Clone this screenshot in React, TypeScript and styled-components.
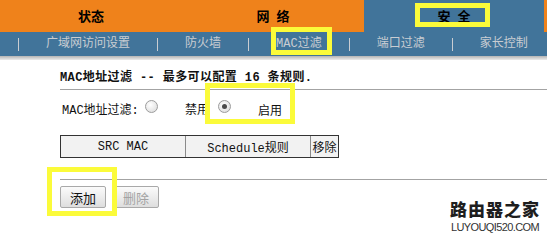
import React from "react";
import styled, { createGlobalStyle } from "styled-components";

const colors = {
  orange: "#ef821b",
  blue: "#41749a",
  navText: "#c9cdd2",
  rule: "#a3a3a3",
  mark: "#fbfb3a",
};

type Tab = { title: string; width: number; active?: boolean };

const tabs: Tab[] = [
  { title: "状态", width: 182 },
  { title: "网 络", width: 182 },
  { title: "安 全", width: 180, active: true },
];

const subMenu = ["广域网访问设置", "防火墙", "MAC过滤", "端口过滤", "家长控制"];

const marks = [
  { x: 415, y: 3, w: 75, h: 24 },
  { x: 271, y: 27, w: 61, h: 28 },
  { x: 205, y: 83, w: 90, h: 41 },
  { x: 47, y: 167, w: 70, h: 49 },
];

const App = () => {
  return (
    <Page>
      <GlobalStyle />
      <TopBar>
        {tabs.map((t) => (
          <TabItem key={t.title} $w={t.width} $active={t.active}>
            {t.title}
          </TabItem>
        ))}
      </TopBar>
      <SubNav>
        {subMenu.map((m) => (
          <React.Fragment key={m}>
            <Sep />
            <NavItem>{m}</NavItem>
          </React.Fragment>
        ))}
      </SubNav>
      <Shade />
      <Content>
        <Heading>MAC地址过滤 -- 最多可以配置 16 条规则.</Heading>
        <Rule />
        <FilterRow>
          <span>MAC地址过滤:</span>
          <Radio />
          <span>禁用</span>
          <Radio $checked />
          <OnLabel>启用</OnLabel>
        </FilterRow>
        <RuleTable>
          <HeadCell>SRC MAC</HeadCell>
          <HeadCell>Schedule规则</HeadCell>
          <HeadCell>移除</HeadCell>
        </RuleTable>
        <Rule $gap={21} />
        <Buttons>
          <Button>添加</Button>
          <Button $disabled>删除</Button>
        </Buttons>
      </Content>
      {marks.map((m, i) => (
        <Mark key={i} $x={m.x} $y={m.y} $w={m.w} $h={m.h} />
      ))}
      <Watermark>
        <Brand>路由器之家</Brand>
        <Site>LUYOUQI520.COM</Site>
      </Watermark>
    </Page>
  );
};

export default App;

const GlobalStyle = createGlobalStyle`
  body {
    margin: 0;
    background: #fff;
  }
`;

const Page = styled.div`
  position: relative;
  width: 547px;
  height: 240px;
  overflow: hidden;
  background: #fff;
  font-family: "Liberation Mono", "Noto Sans CJK SC", monospace;
  font-size: 12px;
  color: #111;
`;

const TopBar = styled.div`
  display: flex;
  height: 32px;
  background: ${colors.orange};
`;

const TabItem = styled.div<{ $w: number; $active?: boolean }>`
  width: ${({ $w }) => $w}px;
  display: flex;
  align-items: center;
  justify-content: center;
  padding-bottom: 1px;
  background: ${({ $active }) => ($active ? colors.blue : "transparent")};
  font-family: "Noto Sans CJK SC", sans-serif;
  font-weight: 700;
  font-size: 13px;
  word-spacing: 4px;
  color: #000;
`;

const SubNav = styled.div`
  display: flex;
  align-items: center;
  height: 24px;
  padding-left: 18px;
  overflow: hidden;
  background: ${colors.blue};
  color: ${colors.navText};
  font-family: "Liberation Mono", "Noto Sans CJK SC", monospace;
  font-size: 12px;
  white-space: nowrap;
`;

const Sep = styled.span`
  flex-shrink: 0;
  width: 1px;
  height: 13px;
  background: ${colors.navText};
`;

const NavItem = styled.span`
  flex-shrink: 0;
  padding: 0 27px;
  line-height: 24px;
`;

const Shade = styled.div`
  height: 4px;
  background: linear-gradient(#b4b4b4, #ececec);
`;

const Content = styled.div`
  display: flex;
  flex-direction: column;
  padding: 10px 0 0 60px;
`;

const Heading = styled.div`
  height: 16px;
  line-height: 16px;
  font-weight: 700;
  font-size: 12px;
  letter-spacing: 0.4px;
`;

const Rule = styled.div<{ $gap?: number }>`
  height: 1px;
  margin-top: ${({ $gap }) => $gap ?? 3}px;
  background: ${colors.rule};
`;

const FilterRow = styled.div`
  display: grid;
  grid-template-columns: 83px 40px 33px 40px auto;
  align-items: center;
  height: 20px;
  margin-top: 8px;
  padding-left: 2px;
  font-size: 12px;
`;

const OnLabel = styled.span`
  padding-top: 3px;
`;

const Radio = styled.span<{ $checked?: boolean }>`
  position: relative;
  width: 11px;
  height: 11px;
  margin-top: -4px;
  border: 1px solid #9c9c9c;
  border-radius: 50%;
  background: radial-gradient(circle at 40% 35%, #ffffff, #d8d8d8);
  &::after {
    content: "";
    display: ${({ $checked }) => ($checked ? "block" : "none")};
    position: absolute;
    left: 3px;
    top: 3px;
    width: 5px;
    height: 5px;
    border-radius: 50%;
    background: #4a4a4a;
  }
`;

const RuleTable = styled.div`
  display: grid;
  grid-template-columns: 124px 125px 28px;
  width: 277px;
  height: 21px;
  margin-top: 17px;
  border: 1px solid #333;
  background: #f2f2f2;
`;

const HeadCell = styled.div`
  display: flex;
  align-items: center;
  justify-content: center;
  font-size: 12px;
  & + & {
    border-left: 1px solid #8a8a8a;
  }
`;

const Buttons = styled.div`
  display: flex;
  gap: 7px;
  margin-top: 6px;
`;

const Button = styled.button<{ $disabled?: boolean }>`
  width: 46px;
  height: 22px;
  padding: 0;
  border: 1px solid #a9a9a9;
  border-radius: 2px;
  background: linear-gradient(#fbfbfb, #dedede);
  font-family: "Noto Sans CJK SC", sans-serif;
  font-size: 13px;
  color: ${({ $disabled }) => ($disabled ? "#a3a3a3" : "#111")};
`;

const Mark = styled.div<{ $x: number; $y: number; $w: number; $h: number }>`
  position: absolute;
  left: ${({ $x }) => $x}px;
  top: ${({ $y }) => $y}px;
  width: ${({ $w }) => $w}px;
  height: ${({ $h }) => $h}px;
  box-sizing: border-box;
  border: 5px solid ${colors.mark};
`;

const Watermark = styled.div`
  position: absolute;
  right: 7px;
  top: 199px;
  display: flex;
  flex-direction: column;
  align-items: center;
`;

const Brand = styled.div`
  font-family: "Noto Sans CJK SC", sans-serif;
  font-weight: 900;
  font-size: 17px;
  line-height: 20px;
  letter-spacing: 1px;
  color: #1e1e1e;
`;

const Site = styled.div`
  margin-top: 2px;
  font-family: "Liberation Sans", sans-serif;
  font-size: 11px;
  line-height: 12px;
  letter-spacing: -0.6px;
  color: #333;
`;
